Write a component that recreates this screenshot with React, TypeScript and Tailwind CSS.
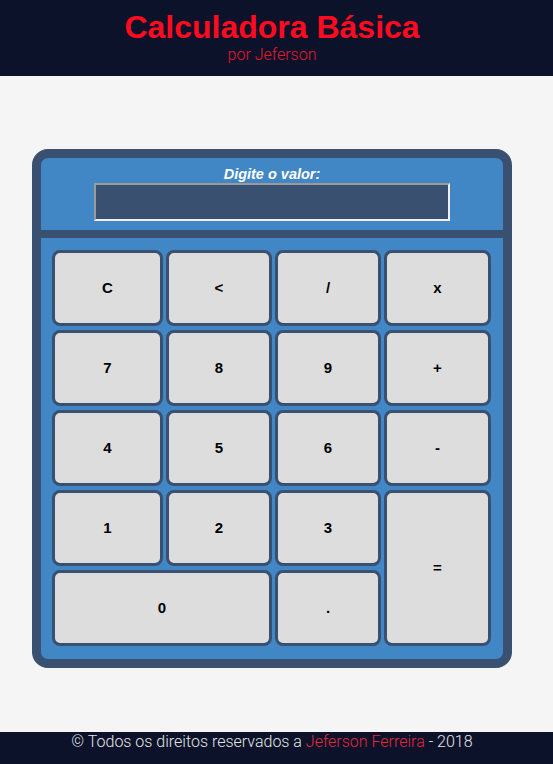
const keys: { label: string; cls?: string }[] = [
  { label: 'C' },
  { label: '<' },
  { label: '/' },
  { label: 'x' },
  { label: '7' },
  { label: '8' },
  { label: '9' },
  { label: '+' },
  { label: '4' },
  { label: '5' },
  { label: '6' },
  { label: '-' },
  { label: '1' },
  { label: '2' },
  { label: '3' },
  { label: '=', cls: 'row-span-2' },
  { label: '0', cls: 'col-span-2' },
  { label: '.' },
];

export default function App() {
  return (
    <div className="h-screen flex flex-col bg-[#f5f5f5] font-['Liberation_Sans',Arial,sans-serif]">
      {/* Header */}
      <header className="h-[76px] shrink-0 bg-[#0b1229]">
        <div className="w-[544px] flex flex-col items-center pt-[8px]">
          <h1 className="text-[32px] leading-[38px] font-bold text-[#ff0a1f]">Calculadora Básica</h1>
          <p className="font-['Roboto',sans-serif] font-light text-[16px] leading-[17px] text-[#e8152e]">por Jeferson</p>
        </div>
      </header>

      {/* Main */}
      <main className="flex-1">
        <div className="w-[544px]">
          <div className="mx-auto mt-[73px] w-[480px] border-[9px] border-[#3a5070] rounded-[16px] bg-[#4187c5] overflow-hidden">
            <div className="h-[72px] flex flex-col items-center pt-[8px]">
              <label className="text-[14.5px] leading-[17px] font-bold italic text-white">Digite o valor:</label>
              <input
                type="text"
                className="w-[356px] h-[38px] bg-[#3a5070] border-2 border-t-[#9a9a9a] border-l-[#9a9a9a] border-b-[#f0f0f0] border-r-[#f0f0f0] text-white px-2 outline-none"
              />
            </div>
            <div className="h-[8px] bg-[#3a5070]" />
            <div className="pl-[11px] pr-[12px] pt-[12px] pb-[13px]">
              <div className="grid grid-cols-[111px_106px_106px_107px] grid-rows-[repeat(5,76px)] gap-x-[3px] gap-y-[4px]">
                {keys.map((k) => (
                  <button
                    key={k.label}
                    className={`${k.cls ?? ''} flex items-center justify-center bg-[#dddddd] border-[3px] border-[#3a5070] rounded-[8px] text-[15px] font-bold text-black`}
                  >
                    {k.label}
                  </button>
                ))}
              </div>
            </div>
          </div>
        </div>
      </main>

      {/* Footer */}
      <footer className="h-[32px] shrink-0 bg-[#0b1229]">
        <div className="w-[544px] flex justify-center pt-[1px]">
          <p className="font-['Roboto',sans-serif] font-light text-[16px] leading-[18px] text-[#e6e6e6]">
            © Todos os direitos reservados a <span className="text-[#e8263f]">Jeferson Ferreira</span> - 2018
          </p>
        </div>
      </footer>
    </div>
  );
}
